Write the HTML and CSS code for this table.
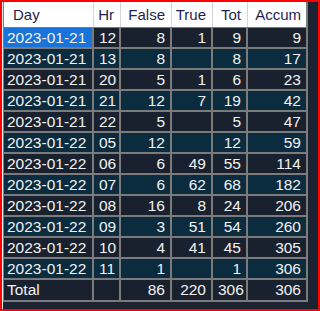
FILE: index.html
```html
<!DOCTYPE html>
<html>
<head>
<meta charset="utf-8">
<link rel="stylesheet" href="styles.css">
</head>
<body>
<div class="frame">
  <div class="grid">
    <div class="h first">Day</div><div class="h">Hr</div><div class="h">False</div><div class="h">True</div><div class="h">Tot</div><div class="h last">Accum</div>

    <div class="c d sel">2023-01-21</div><div class="c a">12</div><div class="c a">8</div><div class="c a">1</div><div class="c a">9</div><div class="c a">9</div>
    <div class="c d b">2023-01-21</div><div class="c b">13</div><div class="c b">8</div><div class="c b"></div><div class="c b">8</div><div class="c b">17</div>
    <div class="c d a">2023-01-21</div><div class="c a">20</div><div class="c a">5</div><div class="c a">1</div><div class="c a">6</div><div class="c a">23</div>
    <div class="c d b">2023-01-21</div><div class="c b">21</div><div class="c b">12</div><div class="c b">7</div><div class="c b">19</div><div class="c b">42</div>
    <div class="c d a">2023-01-21</div><div class="c a">22</div><div class="c a">5</div><div class="c a"></div><div class="c a">5</div><div class="c a">47</div>
    <div class="c d b">2023-01-22</div><div class="c b">05</div><div class="c b">12</div><div class="c b"></div><div class="c b">12</div><div class="c b">59</div>
    <div class="c d a">2023-01-22</div><div class="c a">06</div><div class="c a">6</div><div class="c a">49</div><div class="c a">55</div><div class="c a">114</div>
    <div class="c d b">2023-01-22</div><div class="c b">07</div><div class="c b">6</div><div class="c b">62</div><div class="c b">68</div><div class="c b">182</div>
    <div class="c d a">2023-01-22</div><div class="c a">08</div><div class="c a">16</div><div class="c a">8</div><div class="c a">24</div><div class="c a">206</div>
    <div class="c d b">2023-01-22</div><div class="c b">09</div><div class="c b">3</div><div class="c b">51</div><div class="c b">54</div><div class="c b">260</div>
    <div class="c d a">2023-01-22</div><div class="c a">10</div><div class="c a">4</div><div class="c a">41</div><div class="c a">45</div><div class="c a">305</div>
    <div class="c d b">2023-01-22</div><div class="c b">11</div><div class="c b">1</div><div class="c b"></div><div class="c b">1</div><div class="c b">306</div>
    <div class="c d a">Total</div><div class="c a"></div><div class="c a">86</div><div class="c a">220</div><div class="c a">306</div><div class="c a">306</div>
  </div>
</div>
</body>
</html>
```

FILE: styles.css
```css
html, body {
  margin: 0;
  padding: 0;
}

body {
  width: 320px;
  height: 311px;
  overflow: hidden;
  font-family: "Liberation Sans", Arial, sans-serif;
  font-size: 15px;
}

.frame {
  box-sizing: border-box;
  width: 320px;
  height: 311px;
  border: 2px solid #ff0000;
  background: #1b2232;
  box-shadow: inset 1px 0 0 #f4f4f4;
}

.grid {
  display: grid;
  grid-template-columns: 88px 25px 49px 39px 33px 58px;
  grid-template-rows: 24px repeat(12, 19px) 20px;
  gap: 2px;
  width: max-content;
  margin-left: 1px;
  padding: 0 2px 2px 1px;
  background: #7b7b7b;
}

.h {
  background: #ffffff;
  color: #1f1f50;
  margin-right: -2px;
  margin-bottom: -1px;
  border-right: 1px solid #d6d6d6;
  padding: 3px 6px 0 0;
  text-align: right;
  line-height: 20px;
}

.h.first {
  text-align: left;
  padding-left: 9px;
}

.h.last {
  margin-right: 0;
  border-right: none;
  padding-right: 5px;
}

.c {
  color: #f2f2f2;
  font-size: 15.5px;
  line-height: 20px;
  padding: 0 5px;
  text-align: right;
  white-space: nowrap;
}

.c.d {
  text-align: left;
  padding-left: 3px;
}

.a {
  background: #1a212e;
}

.b {
  background: #0b2b3f;
}

.sel {
  background: #1a73d8;
}
```
